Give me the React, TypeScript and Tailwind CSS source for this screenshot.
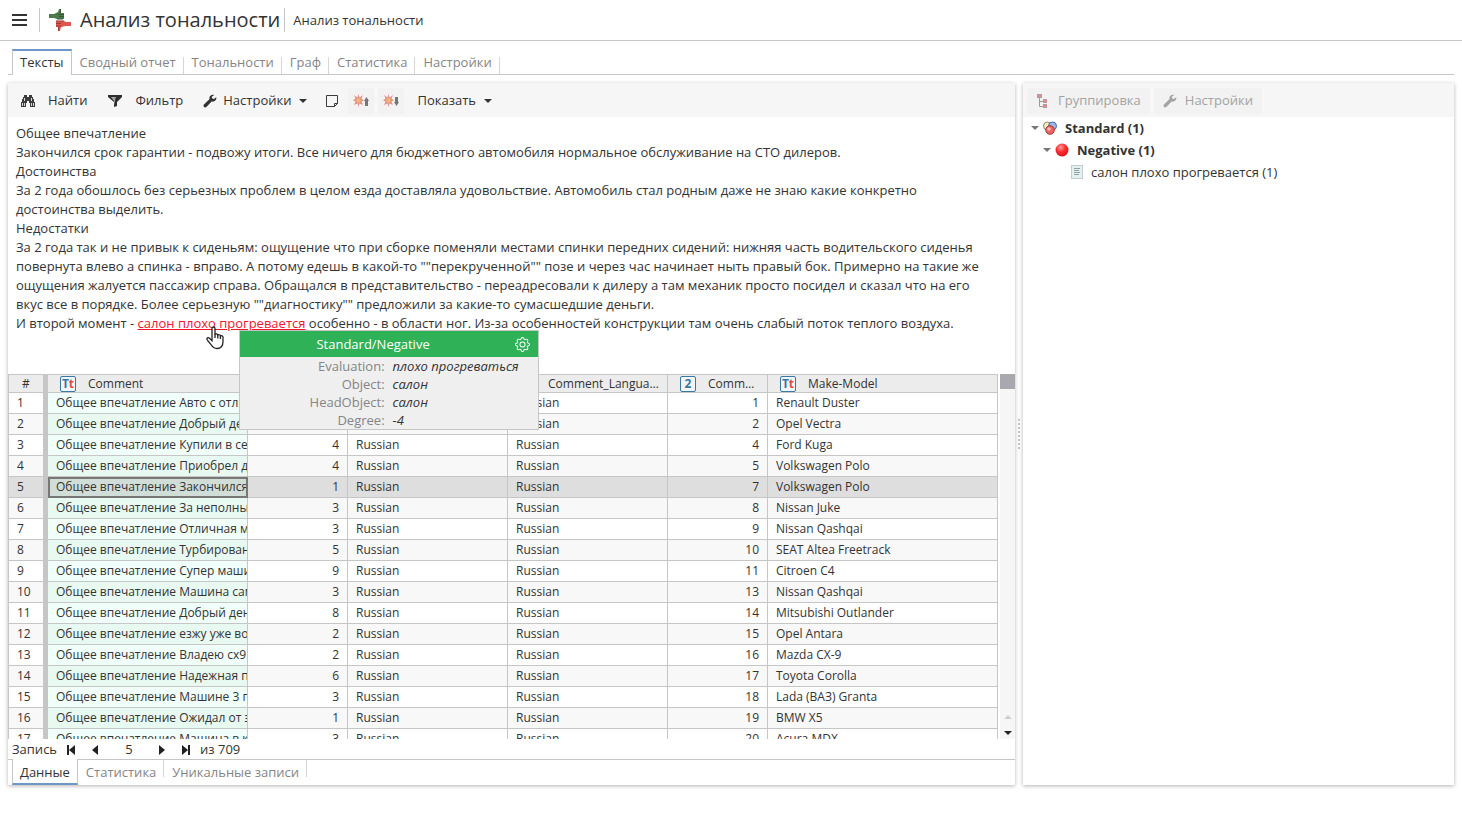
import { useState } from "react"
import type { ReactNode } from "react"
import { BsGear } from "react-icons/bs"

const MAIN_TABS = ["Тексты", "Сводный отчет", "Тональности", "Граф", "Статистика", "Настройки"]
const DATA_TABS = ["Данные", "Статистика", "Уникальные записи"]

const ROWS = [
  { comment: "Общее впечатление Авто с отличным", count: 2, id: 1, model: "Renault Duster" },
  { comment: "Общее впечатление Добрый день", count: 3, id: 2, model: "Opel Vectra" },
  { comment: "Общее впечатление Купили в сентябре", count: 4, id: 4, model: "Ford Kuga" },
  { comment: "Общее впечатление Приобрел два", count: 4, id: 5, model: "Volkswagen Polo" },
  { comment: "Общее впечатление Закончился срок", count: 1, id: 7, model: "Volkswagen Polo" },
  { comment: "Общее впечатление За неполный год", count: 3, id: 8, model: "Nissan Juke" },
  { comment: "Общее впечатление Отличная машина", count: 3, id: 9, model: "Nissan Qashqai" },
  { comment: "Общее впечатление Турбированный", count: 5, id: 10, model: "SEAT Altea Freetrack" },
  { comment: "Общее впечатление Супер машина", count: 9, id: 11, model: "Citroen C4" },
  { comment: "Общее впечатление Машина сама", count: 3, id: 13, model: "Nissan Qashqai" },
  { comment: "Общее впечатление Добрый день", count: 8, id: 14, model: "Mitsubishi Outlander" },
  { comment: "Общее впечатление езжу уже восемь", count: 2, id: 15, model: "Opel Antara" },
  { comment: "Общее впечатление Владею сх9", count: 2, id: 16, model: "Mazda CX-9" },
  { comment: "Общее впечатление Надежная при", count: 6, id: 17, model: "Toyota Corolla" },
  { comment: "Общее впечатление Машине 3 года", count: 3, id: 18, model: "Lada (ВАЗ) Granta" },
  { comment: "Общее впечатление Ожидал от этого", count: 1, id: 19, model: "BMW X5" },
  { comment: "Общее впечатление Машина в км", count: 3, id: 20, model: "Acura MDX" },
]

const FACTS = [
  { label: "Evaluation:", value: "плохо прогреваться" },
  { label: "Object:", value: "салон" },
  { label: "HeadObject:", value: "салон" },
  { label: "Degree:", value: "-4" },
]

function LogoIcon() {
  return (
    <svg width="24" height="24" viewBox="0 0 24 24" aria-hidden="true">
      <path d="M1 6h5l4-2 1-3h2v4h3v6H9l-3-1H1z" fill="#4f7a4c" />
      <path d="M10 6.500h6M11 8.500h5M9 11h6M12.500 1v4" stroke="#365a37" />
      <path d="M23 18h-5l-5 1-1 4h-2v-4H8v-6h8l2 1h5z" fill="#e0564c" />
      <path d="M8 13h8M8 15.500h5M8 18h5M10.500 19v4" stroke="#9b3a36" />
    </svg>
  )
}

function BinocularsIcon() {
  return (
    <svg width="16" height="14" viewBox="0 0 16 14" aria-hidden="true">
      <path d="M4 1h3v2h2V1h3v2h1v2h1v3h1v5h-5V9H9V7H7v2H6v4H1V8h1V5h1V3h1z" fill="#3c3c3c" />
      <path d="M4 4h1v3H4zM11 4h1v3h-1zM2 9h1v3H2zM4 9h1v3H4zM11 9h1v3h-1zM13 9h1v3h-1z" fill="#d9d9d9" />
    </svg>
  )
}

function FilterIcon() {
  return (
    <svg width="16" height="14" viewBox="0 0 16 14" aria-hidden="true">
      <path d="M1 1h14v2l-5 5v4l-3 1V8L1 3z" fill="#2f2f2f" />
      <path d="M4 3h5L8 6v5L7 7z" fill="#a5a5a5" />
    </svg>
  )
}

function WrenchIcon({ className }: { className?: string }) {
  return (
    <svg width="14" height="14" viewBox="0 0 14 14" aria-hidden="true" className={className}>
      <path
        d="M13.300 3.300 10.800 5 9 4.300 8.800 2.700 11.200.9C9.200.2 6.900 1.200 6.500 3.200c-.2.800-.1 1.300.1 1.900L1 10.600c-1.500 1.600.8 3.900 2.400 2.400l5.200-5.500c2.800.8 5.200-1.500 4.700-4.200z"
        fill="currentColor"
      />
    </svg>
  )
}

function NoteIcon() {
  return (
    <svg width="14" height="14" viewBox="0 0 14 14" aria-hidden="true" fill="none" stroke="#3c3c3c">
      <path d="M1.500 1.500h11v8l-3 3h-8z" />
      <path d="M12.500 9.500h-3v3" />
    </svg>
  )
}

function BurstIcon({ down }: { down?: boolean }) {
  return (
    <svg width="16" height="14" viewBox="0 0 16 14" aria-hidden="true">
      <path d="M5.500 0l1 3.500L10 1 8.500 4.500l2.500 2-2.500 1L10 11 6.500 9.500l-1 3.500-1-3.500L1 11l1.500-3.500-2.500-1 2.500-2L1 1l3.500 2.500z" fill="#e29389" />
      <circle cx="5.500" cy="6.500" r="2.200" fill="#f3b572" />
      <path d={down ? "M12 3h3v5h1l-2.500 4L11 8h1z" : "M12 12h3V7h1l-2.500-4L11 7h1z"} fill="#757575" />
    </svg>
  )
}

function TreeIcon() {
  return (
    <svg width="14" height="14" viewBox="0 0 14 14" aria-hidden="true">
      <path d="M3.500 4v8.500H8M3.500 7.500H8" fill="none" stroke="#9a9a9a" />
      <path d="M1 0h5v4H1zM7 5h4v4H7zM7 10h4v4H7z" fill="#a5a0a0" />
      <path d="M2 1h4v2H2zM8 6h3v2H8zM8 11h3v2H8z" fill="#e08c8c" />
    </svg>
  )
}

function SpheresIcon() {
  return (
    <svg width="14" height="14" viewBox="0 0 14 14" aria-hidden="true">
      <circle cx="4.500" cy="5" r="4" fill="#f4ecc4" stroke="#8d8a6b" />
      <circle cx="9.500" cy="5" r="4" fill="#9ab9e8" stroke="#4969a5" />
      <circle cx="7" cy="9" r="4.300" fill="#ee6462" stroke="#a93434" />
      <circle cx="6" cy="8" r="1.800" fill="#fab9b5" />
    </svg>
  )
}

function RedBallIcon() {
  return (
    <svg width="14" height="14" viewBox="0 0 14 14" aria-hidden="true">
      <defs>
        <radialGradient id="ball" cx="0.400" cy="0.300" r="0.700">
          <stop offset="0" stopColor="#ff9c9c" />
          <stop offset="0.500" stopColor="#fb2f33" />
          <stop offset="1" stopColor="#e01219" />
        </radialGradient>
      </defs>
      <circle cx="7" cy="7" r="6.500" fill="url(#ball)" />
    </svg>
  )
}

function PageIcon() {
  return (
    <svg width="12" height="14" viewBox="0 0 12 14" aria-hidden="true">
      <path d="M.5.5h11v13H.5z" fill="#e3f0ef" stroke="#8fa5a5" strokeDasharray="1 1" />
      <path d="M3 3.500h6M3 5.500h5M3 7.500h6M3 9.500h5" stroke="#8aa3a3" />
    </svg>
  )
}

function Caret({ className }: { className?: string }) {
  return (
    <svg width="8" height="4" viewBox="0 0 8 4" aria-hidden="true" className={className}>
      <path d="M0 0h8L4 4z" fill="currentColor" />
    </svg>
  )
}

function HandCursor() {
  return (
    <svg width="18" height="24" viewBox="0 0 18 24" aria-hidden="true">
      <path
        d="M6 2.500c0-2 3-2 3 0v6c.4-1 2.600-.8 2.800.6.800-.8 2.400-.4 2.600.8 1-.5 2.600 0 2.600 1.500v4c0 4-2 7.100-6 7.100-3 0-4.500-1.500-6-4L1.200 13.800c-.9-1.700 1-2.800 2.300-1.500L6 14.800z"
        fill="#fff"
        stroke="#222"
        strokeWidth="1.300"
      />
      <path d="M9 8v4M11.800 9v3.500M14.400 10v3" stroke="#222" strokeWidth="1.300" />
    </svg>
  )
}

function TypeBadge({ numeric }: { numeric?: boolean }) {
  return (
    <span className="flex h-4 w-4 shrink-0 items-center justify-center rounded-xs border border-[#3878a3] bg-[#f2f6f9] text-xs leading-none font-bold text-[#3878a3]">
      {numeric ? "2" : <>T<span className="text-[#e04b42]">t</span></>}
    </span>
  )
}

function ToolButton({ children, disabled }: { children: ReactNode; disabled?: boolean }) {
  return (
    <button
      type="button"
      disabled={disabled}
      className="flex h-[26px] items-center rounded-xs px-[5px] disabled:bg-[#f2f2f2] disabled:text-[#a3a3a3]"
    >
      {children}
    </button>
  )
}

function HeadCell({ children }: { children?: ReactNode }) {
  return (
    <th className="overflow-hidden border-r border-b border-[#c6c6c6] py-0 pr-2 pl-3 font-normal">
      <div className="flex h-[17px] items-center gap-3">{children}</div>
    </th>
  )
}

function FactsPopup() {
  return (
    <span className="absolute top-4 left-[101px] z-20 block w-[300px] border border-[#c6c6c6] bg-[#efefef]">
      <span className="flex h-[26px] items-center bg-[#2fb158] pr-2 text-white">
        <span className="flex-1 text-center">Standard/Negative</span>
        <button type="button" aria-label="Настроить" className="pl-2">
          <BsGear className="h-[15px] w-[15px]" />
        </button>
      </span>
      {FACTS.map((fact) => (
        <span key={fact.label} className="flex gap-2 leading-[18px]">
          <span className="w-[145px] text-right text-[#858585]">{fact.label}</span>
          <span className="text-[#333] italic">{fact.value}</span>
        </span>
      ))}
    </span>
  )
}

function ReviewText() {
  return (
    <div className="pt-[7px] pr-6 pb-[41px] pl-2 leading-[19px]">
      <p>Общее впечатление</p>
      <p>Закончился срок гарантии - подвожу итоги. Все ничего для бюджетного автомобиля нормальное обслуживание на СТО дилеров.</p>
      <p>Достоинства</p>
      <p>За 2 года обошлось без серьезных проблем в целом езда доставляла удовольствие. Автомобиль стал родным даже не знаю какие конкретно достоинства выделить.</p>
      <p>Недостатки</p>
      <p>
        За 2 года так и не привык к сиденьям: ощущение что при сборке поменяли местами спинки передних сидений: нижняя часть водительского сиденья повернута влево а спинка - вправо. А потому едешь в какой-то ""перекрученной"" позе и через час начинает ныть правый бок. Примерно на такие же ощущения жалуется пассажир справа. Обращался в представительство - переадресовали к дилеру а там механик просто посидел и сказал что на его вкус все в порядке. Более серьезную ""диагностику"" предложили за какие-то сумасшедшие деньги.
      </p>
      <p>
        И второй момент -{" "}
        <span className="relative inline-block">
          <a href="#fact" className="text-[#f0142f] underline">салон плохо прогревается</a>
          <span className="absolute top-3 left-[68px] z-30">
            <HandCursor />
          </span>
          <FactsPopup />
        </span>{" "}
        особенно - в области ног. Из-за особенностей конструкции там очень слабый поток теплого воздуха.
      </p>
    </div>
  )
}

function DataTable({ selected, onSelect }: { selected: number; onSelect: (row: number) => void }) {
  const cell = "overflow-hidden border-r border-b border-[#c6c6c6] px-2 py-0 whitespace-nowrap"
  return (
    <div className="flex min-h-0 flex-1 overflow-hidden">
      <div className="min-w-0 flex-1 overflow-hidden">
        <table className="w-full table-fixed border-separate border-spacing-0 border-t border-l border-[#c6c6c6] text-xs leading-5">
          <colgroup>
            <col className="w-[39px]" />
            <col className="w-[200px]" />
            <col className="w-[100px]" />
            <col className="w-[160px]" />
            <col className="w-[160px]" />
            <col className="w-[100px]" />
            <col />
          </colgroup>
          <thead>
            <tr className="bg-[#ececec] leading-[17px]">
              <th className="border-r-[5px] border-b border-r-[#c6c6c6] border-b-[#c6c6c6] p-0 font-normal">#</th>
              <HeadCell><TypeBadge /><span>Comment</span></HeadCell>
              <HeadCell><TypeBadge numeric /><span className="truncate">Count</span></HeadCell>
              <HeadCell><TypeBadge /><span className="truncate">Language</span></HeadCell>
              <HeadCell><TypeBadge /><span className="truncate">Comment_Language</span></HeadCell>
              <HeadCell><TypeBadge numeric /><span className="truncate">Comment_ID</span></HeadCell>
              <HeadCell><TypeBadge /><span>Make-Model</span></HeadCell>
            </tr>
          </thead>
          <tbody>
            {ROWS.map((row, i) => {
              const active = i + 1 === selected
              return (
                <tr
                  key={row.id}
                  onClick={() => onSelect(i + 1)}
                  className={active ? "bg-[#dedede]" : i % 2 ? "bg-[#f8f8f8]" : "bg-white"}
                >
                  <td className="border-r-[5px] border-b border-r-[#c6c6c6] border-b-[#c6c6c6] py-0 pl-2">{i + 1}</td>
                  <td className={`${cell} ${active ? "bg-[#d1ded7] outline-2 -outline-offset-2 outline-[#777]" : i % 2 ? "bg-[#e8f9f2]" : "bg-[#f0fffa]"}`}>{row.comment}</td>
                  <td className={`${cell} text-right`}>{row.count}</td>
                  <td className={cell}>Russian</td>
                  <td className={cell}>Russian</td>
                  <td className={`${cell} text-right`}>{row.id}</td>
                  <td className={cell}>{row.model}</td>
                </tr>
              )
            })}
          </tbody>
        </table>
      </div>
      {/* Scrollbar */}
      <div className="ml-[2px] flex w-[15px] flex-col items-center bg-[#f6f6f6]">
        <div className="h-[15px] w-full bg-[#a8a8ae]" />
        <Caret className="mt-auto mb-3 rotate-180 text-[#cfcfcf]" />
        <Caret className="mb-1 text-[#222]" />
      </div>
    </div>
  )
}

function Pager({ selected }: { selected: number }) {
  return (
    <div className="flex h-5 shrink-0 items-center pt-0.5 pl-1">
      <span>Запись</span>
      <button type="button" aria-label="Первая" className="ml-[10px]">
        <svg width="9" height="10" viewBox="0 0 9 10" fill="#222"><path d="M0 0h2v10H0zM8 0v10L2 5z" /></svg>
      </button>
      <button type="button" aria-label="Предыдущая" className="ml-4">
        <svg width="7" height="10" viewBox="0 0 7 10" fill="#222"><path d="M6 0v10L0 5z" /></svg>
      </button>
      <input
        aria-label="Номер записи"
        readOnly
        value={selected}
        className="mx-2 w-11 bg-transparent text-center outline-none"
      />
      <button type="button" aria-label="Следующая">
        <svg width="7" height="10" viewBox="0 0 7 10" fill="#222"><path d="M0 0v10l6-5z" /></svg>
      </button>
      <button type="button" aria-label="Последняя" className="ml-4">
        <svg width="9" height="10" viewBox="0 0 9 10" fill="#222"><path d="M6 0h2v10H6zM0 0v10l6-5z" /></svg>
      </button>
      <span className="ml-[9px]">из 709</span>
    </div>
  )
}

export default function App() {
  const [tab, setTab] = useState("Тексты")
  const [dataTab, setDataTab] = useState("Данные")
  const [selected, setSelected] = useState(5)

  return (
    <div className="flex h-screen flex-col bg-white pb-7 font-['Open_Sans',sans-serif] text-[13px] text-[#333]">
      {/* Title bar */}
      <header className="flex h-[41px] shrink-0 items-center border-b border-[#c6c6c6] pl-3">
        <button type="button" aria-label="Меню" className="flex w-[15px] flex-col gap-[3px]">
          <span className="h-[2px] bg-[#333]" />
          <span className="h-[2px] bg-[#333]" />
          <span className="h-[2px] bg-[#333]" />
        </button>
        <div className="ml-3 h-6 w-px bg-[#c6c6c6]" />
        <div className="ml-2 flex items-center gap-2">
          <LogoIcon />
          <h1 className="text-xl">Анализ тональности</h1>
        </div>
        <div className="ml-1 h-6 w-px bg-[#c6c6c6]" />
        <span className="pt-0.5 pl-2">Анализ тональности</span>
      </header>

      {/* Main tabs */}
      <nav className="mx-2 mt-2 flex h-[26px] shrink-0">
        <span className="w-1 border-b border-[#c6c6c6]" />
        {MAIN_TABS.map((name) => (
          <button
            key={name}
            type="button"
            onClick={() => setTab(name)}
            className={
              name === tab
                ? "border-x border-t-2 border-x-[#c6c6c6] border-t-[#6c97c7] px-[7px]"
                : "border-b border-[#c6c6c6] pt-2 text-[#858585]"
            }
          >
            {name === tab ? name : <span className="block h-full border-r border-[#d6d6d6] pr-[7px] pl-2 leading-[10px]">{name}</span>}
          </button>
        ))}
        <span className="flex-1 border-b border-[#c6c6c6]" />
      </nav>

      <main className="mx-2 mt-2 flex min-h-0 flex-1">
        {/* Texts panel */}
        <section className="flex min-w-0 flex-1 flex-col shadow-[0_1px_4px_rgba(0,0,0,0.3)]">
          <div className="flex h-[34px] shrink-0 items-center bg-[#f6f6f6] pt-0.5 pl-[7px]">
            <ToolButton><BinocularsIcon /><span className="ml-3">Найти</span></ToolButton>
            <span className="w-[10px]" />
            <ToolButton><FilterIcon /><span className="ml-3">Фильтр</span></ToolButton>
            <span className="w-[10px]" />
            <ToolButton><WrenchIcon /><span className="ml-1.5">Настройки</span><Caret className="ml-2" /></ToolButton>
            <span className="w-2" />
            <ToolButton><NoteIcon /></ToolButton>
            <span className="w-1" />
            <ToolButton disabled><BurstIcon /></ToolButton>
            <span className="w-1" />
            <ToolButton disabled><BurstIcon down /></ToolButton>
            <span className="w-2" />
            <ToolButton><span>Показать</span><Caret className="ml-2" /></ToolButton>
          </div>

          <ReviewText />
          <DataTable selected={selected} onSelect={setSelected} />
          <Pager selected={selected} />

          <nav className="flex h-[26px] shrink-0">
            <span className="w-1 border-t border-[#c6c6c6]" />
            {DATA_TABS.map((name) => (
              <button
                key={name}
                type="button"
                onClick={() => setDataTab(name)}
                className={
                  name === dataTab
                    ? "border-x border-b-2 border-x-[#c6c6c6] border-b-[#6c97c7] px-[7px] pt-1"
                    : "border-t border-[#c6c6c6] pb-2 text-[#858585]"
                }
              >
                {name === dataTab ? name : <span className="block h-full border-r border-[#d6d6d6] pr-[7px] pl-2 leading-6">{name}</span>}
              </button>
            ))}
            <span className="flex-1 border-t border-[#c6c6c6]" />
          </nav>
        </section>

        {/* Splitter */}
        <div className="flex w-2 shrink-0 items-center justify-center">
          <div className="h-[30px] border-l-2 border-dotted border-[#c6c6c6]" />
        </div>

        {/* Grouping panel */}
        <aside className="w-[431px] shrink-0 shadow-[0_1px_4px_rgba(0,0,0,0.3)]">
          <div className="flex h-[34px] items-center gap-1 bg-[#f6f6f6] pt-0.5 pl-1">
            <ToolButton disabled>
              <span className="ml-1"><TreeIcon /></span>
              <span className="mr-1 ml-2">Группировка</span>
            </ToolButton>
            <ToolButton disabled>
              <WrenchIcon className="ml-1" />
              <span className="mr-1 ml-2">Настройки</span>
            </ToolButton>
          </div>
          <ul className="leading-[22px]">
            <li className="flex items-center pl-2 font-bold">
              <Caret className="mr-1 text-[#777]" />
              <SpheresIcon />
              <span className="ml-2">Standard (1)</span>
            </li>
            <li className="flex items-center pl-5 font-bold">
              <Caret className="mr-1 text-[#777]" />
              <RedBallIcon />
              <span className="ml-2">Negative (1)</span>
            </li>
            <li className="flex items-center pl-12">
              <PageIcon />
              <span className="ml-2">салон плохо прогревается (1)</span>
            </li>
          </ul>
        </aside>
      </main>
    </div>
  )
}
